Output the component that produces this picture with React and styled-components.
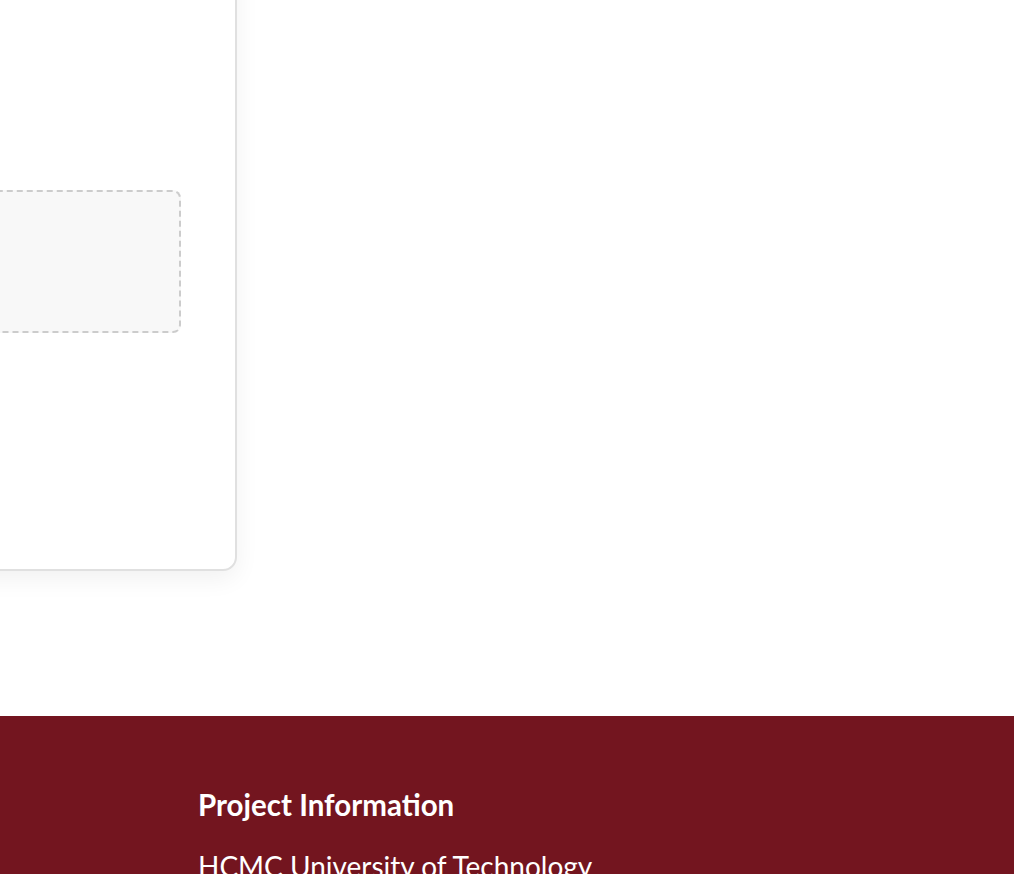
import React from "react";
import styled, { createGlobalStyle } from "styled-components";

const GlobalStyle = createGlobalStyle`
  html, body {
    margin: 0;
    padding: 0;
    background: #fff;
    font-family: Lato, "Noto Sans", sans-serif;
    overflow: hidden;
  }
`;

const Page = styled.div`
  display: flex;
  flex-direction: column;
  min-height: 874px;
`;

const Main = styled.main`
  display: flex;
  align-items: flex-start;
  height: 716px;
`;

const Card = styled.section`
  box-sizing: border-box;
  width: 520px;
  height: 800px;
  margin-top: -229px;
  margin-left: -283px;
  padding: 0 54px 0 40px;
  background: #fff;
  border: 2px solid #e0e0e0;
  border-radius: 14px;
  box-shadow: 0 8px 24px rgba(0, 0, 0, 0.06);
  display: flex;
  flex-direction: column;
`;

const DropZone = styled.div`
  box-sizing: border-box;
  height: 143px;
  margin-top: 417px;
  background: #f8f8f8;
  border: 2px dashed #cccccc;
  border-radius: 8px;
`;

const Footer = styled.footer`
  background: #73151f;
  color: #fff;
  padding: 71px 0 0 198px;
  flex: 1;
`;

const FooterTitle = styled.h3`
  margin: 0 0 26px;
  font-size: 29.5px;
  font-weight: 700;
  line-height: 36px;
`;

const FooterText = styled.p`
  margin: 0;
  font-size: 28px;
  font-weight: 400;
  line-height: 34px;
  white-space: nowrap;
`;

export default function App() {
  return (
    <Page>
      <GlobalStyle />
      <Main>
        <Card>
          <DropZone />
        </Card>
      </Main>
      <Footer>
        <FooterTitle>Project Information</FooterTitle>
        <FooterText>HCMC University of Technology</FooterText>
      </Footer>
    </Page>
  );
}
